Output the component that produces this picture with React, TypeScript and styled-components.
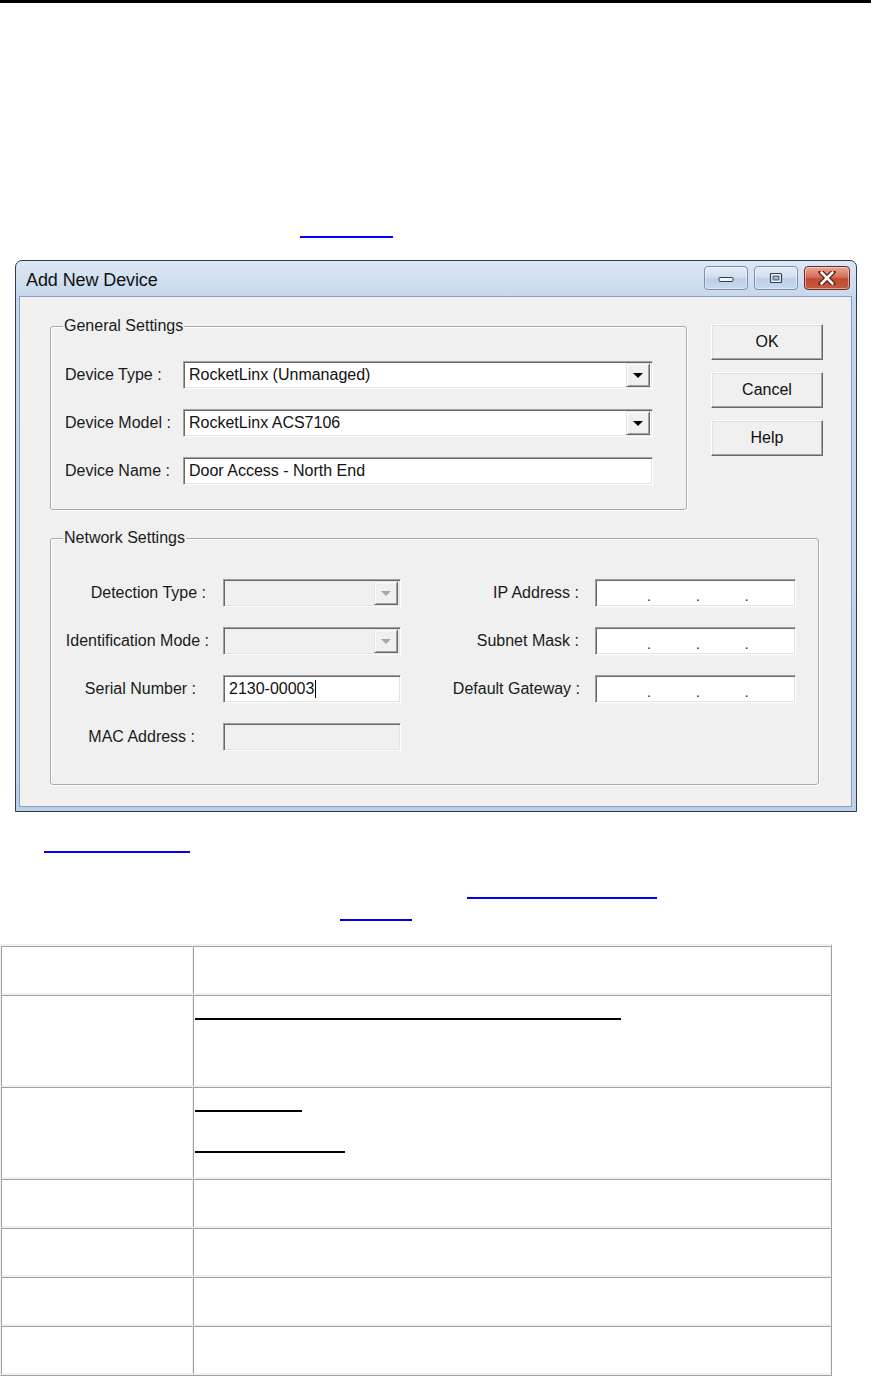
import React from "react";
import styled, { createGlobalStyle } from "styled-components";

const GlobalStyle = createGlobalStyle`
  body {
    margin: 0;
    background: #ffffff;
    font-family: "Liberation Sans", Arial, sans-serif;
  }
`;

const Page = styled.div`
  width: 871px;
  height: 1376px;
  overflow: hidden;
  display: flex;
  flex-direction: column;
`;

const TopRule = styled.div`
  height: 3px;
  background: #000;
`;

const LinkRule = styled.div<{ $top: number; $left: number; $width: number }>`
  margin-top: ${(p) => p.$top}px;
  margin-left: ${(p) => p.$left}px;
  width: ${(p) => p.$width}px;
  height: 2px;
  background: #0000ff;
`;

// ---------- dialog window ----------

const Window = styled.div`
  margin-top: 22px;
  margin-left: 15px;
  width: 842px;
  height: 552px;
  box-sizing: border-box;
  border: 1px solid #2e3b4c;
  border-radius: 7px 7px 0 0;
  background: linear-gradient(#dce7f5, #c4d6ec 40px, #bcd0ea);
  padding: 0 4px 4px 3px;
  display: flex;
  flex-direction: column;
`;

const TitleBar = styled.div`
  height: 35px;
  display: flex;
  align-items: center;
  padding-left: 7px;
  padding-right: 2px;
`;

const Title = styled.div`
  flex: 1;
  font-family: "Liberation Sans", Arial, sans-serif;
  font-size: 18px;
  color: #111;
  letter-spacing: -0.1px;
  margin-top: 3px;
`;

const CaptionButtons = styled.div`
  display: flex;
  gap: 6px;
  margin-top: -2px;
`;

const CaptionButton = styled.div<{ $close?: boolean }>`
  width: ${(p) => (p.$close ? 46 : 44)}px;
  height: 24px;
  box-sizing: border-box;
  border-radius: 4px;
  border: 1px solid ${(p) => (p.$close ? "#6f2a1e" : "#7b8fa8")};
  background: ${(p) =>
    p.$close
      ? "linear-gradient(#e9a898, #d2705c 45%, #c04a31 55%, #c65a42)"
      : "linear-gradient(#e4ecf7, #d2def0 45%, #bccfe8 55%, #c8d8ee)"};
  box-shadow: inset 0 0 0 1px rgba(255, 255, 255, 0.45);
  display: flex;
  align-items: center;
  justify-content: center;
`;

const Client = styled.div`
  flex: 1;
  box-sizing: border-box;
  background: #f0f0f0;
  border: 1px solid #8aa0bd;
  padding: 29px 0 0 30px;
  display: flex;
  flex-direction: column;
  gap: 28px;
`;

const TopSection = styled.div`
  display: flex;
  align-items: flex-start;
  gap: 24px;
`;

const GroupBox = styled.div<{ $width: number; $height: number }>`
  position: relative;
  width: ${(p) => p.$width}px;
  height: ${(p) => p.$height}px;
  box-sizing: border-box;
  border: 1px solid #a9a9a9;
  border-radius: 3px;
  box-shadow: inset 1px 1px 0 #ffffff, 1px 1px 0 #ffffff;
  padding-left: 14px;
`;

const GroupLabel = styled.div`
  position: absolute;
  top: -10px;
  left: 12px;
  padding: 0 1px;
  background: #f0f0f0;
  font-size: 16px;
  line-height: 18px;
  color: #1a1a1a;
`;

const GeneralRows = styled.div`
  padding-top: 34px;
  display: flex;
  flex-direction: column;
  gap: 20px;
`;

const FormRow = styled.div`
  display: flex;
  align-items: center;
`;

const Label = styled.div<{ $width: number }>`
  width: ${(p) => p.$width}px;
  font-size: 16px;
  color: #1a1a1a;
  white-space: nowrap;
`;

const Sunken = styled.div<{ $width: number; $disabled?: boolean }>`
  width: ${(p) => p.$width}px;
  height: 28px;
  box-sizing: border-box;
  border-top: 1px solid #a0a0a0;
  border-left: 1px solid #a0a0a0;
  border-right: 1px solid #ffffff;
  border-bottom: 1px solid #ffffff;
  box-shadow: inset 1px 1px 0 #696969, inset -1px -1px 0 #e3e3e3;
  background: ${(p) => (p.$disabled ? "#f0f0f0" : "#ffffff")};
  display: flex;
  align-items: center;
  padding: 2px 2px 2px 5px;
  font-size: 16px;
  color: #111;
  white-space: nowrap;
`;

const FieldText = styled.span`
  flex: 1;
`;

const DropButton = styled.div<{ $disabled?: boolean }>`
  width: 24px;
  height: 24px;
  box-sizing: border-box;
  background: #f0f0f0;
  border-top: 1px solid #e3e3e3;
  border-left: 1px solid #e3e3e3;
  border-right: 1px solid #696969;
  border-bottom: 1px solid #696969;
  box-shadow: inset 1px 1px 0 #ffffff, inset -1px -1px 0 #a0a0a0;
  display: flex;
  align-items: center;
  justify-content: center;

  &::after {
    content: "";
    border-left: 5px solid transparent;
    border-right: 5px solid transparent;
    border-top: 5px solid ${(p) => (p.$disabled ? "#a6a6a6" : "#000")};
  }
`;

const Caret = styled.span`
  display: inline-block;
  width: 1px;
  height: 18px;
  background: #000;
  vertical-align: middle;
  margin-left: 1px;
`;

const ButtonColumn = styled.div`
  display: flex;
  flex-direction: column;
  gap: 12px;
  margin-top: -2px;
`;

const PushButton = styled.div`
  width: 112px;
  height: 36px;
  box-sizing: border-box;
  background: #f0f0f0;
  border-top: 1px solid #ffffff;
  border-left: 1px solid #ffffff;
  border-right: 1px solid #696969;
  border-bottom: 1px solid #696969;
  box-shadow: inset -1px -1px 0 #a0a0a0, inset 1px 1px 0 #e3e3e3;
  display: flex;
  align-items: center;
  justify-content: center;
  font-size: 16px;
  color: #111;
`;

const NetworkGrid = styled.div`
  padding-top: 40px;
  display: grid;
  grid-template-columns: 158px 178px 194px 201px;
  grid-auto-rows: 28px;
  row-gap: 20px;
  align-items: center;
`;

const GridLabel = styled.div<{ $pad: number }>`
  text-align: right;
  padding-right: ${(p) => p.$pad}px;
  font-size: 16px;
  color: #1a1a1a;
  white-space: nowrap;
`;

const IpDots = styled.div`
  display: flex;
  gap: 45px;
  padding-left: 46px;
  padding-top: 6px;
  font-size: 14px;
  color: #222;
`;

// ---------- table ----------

const Table = styled.table`
  margin-top: 23px;
  width: 832px;
  border-collapse: separate;
  border-spacing: 0;
  border-top: 2px solid #f0f0f0;
  border-left: 1px solid #f0f0f0;
  border-right: 1px solid #a0a0a0;
  border-bottom: 1px solid #a0a0a0;
`;

const Cell = styled.td<{ $width?: number }>`
  width: ${(p) => (p.$width ? `${p.$width}px` : "auto")};
  padding: 0 0 0 1px;
  vertical-align: top;
  border-top: 1px solid #a0a0a0;
  border-left: 1px solid #a0a0a0;
  border-right: 1px solid #f0f0f0;
  border-bottom: 2px solid #f0f0f0;
`;

const CellBody = styled.div<{ $height: number }>`
  height: ${(p) => p.$height}px;
  display: flex;
  flex-direction: column;
`;

const TextRule = styled.div<{ $top: number; $width: number }>`
  margin-top: ${(p) => p.$top}px;
  width: ${(p) => p.$width}px;
  height: 2px;
  background: #000;
`;

const MinGlyph = () => (
  <svg width="16" height="10" viewBox="0 0 16 10">
    <rect x="1" y="4.5" width="14" height="4" rx="1" fill="#f4f7fb" stroke="#2f3e52" strokeWidth="1" />
  </svg>
);

const MaxGlyph = () => (
  <svg width="14" height="12" viewBox="0 0 14 12">
    <rect x="1.5" y="1.5" width="11" height="9" rx="1" fill="#f4f7fb" stroke="#2f3e52" strokeWidth="1.2" />
    <rect x="4" y="4" width="6" height="4" fill="#9fb4cf" stroke="#2f3e52" strokeWidth="0.8" />
  </svg>
);

const CloseGlyph = () => (
  <svg width="18" height="14" viewBox="0 0 18 14">
    <path d="M3 1 L15 13 M15 1 L3 13" stroke="#4a1a10" strokeWidth="5" strokeLinecap="round" />
    <path d="M3.5 1.5 L14.5 12.5 M14.5 1.5 L3.5 12.5" stroke="#ffffff" strokeWidth="2.6" strokeLinecap="round" />
  </svg>
);

const rows: { height: number; rules: { top: number; width: number }[] }[] = [
  { height: 46, rules: [] },
  { height: 89, rules: [{ top: 22, width: 426 }] },
  { height: 89, rules: [{ top: 22, width: 107 }, { top: 39, width: 150 }] },
  { height: 46, rules: [] },
  { height: 46, rules: [] },
  { height: 46, rules: [] },
  { height: 46, rules: [] },
];

export default function App() {
  return (
    <Page>
      <GlobalStyle />
      <TopRule />
      <LinkRule $top={233} $left={300} $width={93} />

      <Window>
        <TitleBar>
          <Title>Add New Device</Title>
          <CaptionButtons>
            <CaptionButton>
              <MinGlyph />
            </CaptionButton>
            <CaptionButton>
              <MaxGlyph />
            </CaptionButton>
            <CaptionButton $close>
              <CloseGlyph />
            </CaptionButton>
          </CaptionButtons>
        </TitleBar>

        <Client>
          <TopSection>
            <GroupBox $width={637} $height={184}>
              <GroupLabel>General Settings</GroupLabel>
              <GeneralRows>
                <FormRow>
                  <Label $width={118}>Device Type :</Label>
                  <Sunken $width={470}>
                    <FieldText>RocketLinx (Unmanaged)</FieldText>
                    <DropButton />
                  </Sunken>
                </FormRow>
                <FormRow>
                  <Label $width={118}>Device Model :</Label>
                  <Sunken $width={470}>
                    <FieldText>RocketLinx ACS7106</FieldText>
                    <DropButton />
                  </Sunken>
                </FormRow>
                <FormRow>
                  <Label $width={118}>Device Name :</Label>
                  <Sunken $width={470}>
                    <FieldText>Door Access - North End</FieldText>
                  </Sunken>
                </FormRow>
              </GeneralRows>
            </GroupBox>

            <ButtonColumn>
              <PushButton>OK</PushButton>
              <PushButton>Cancel</PushButton>
              <PushButton>Help</PushButton>
            </ButtonColumn>
          </TopSection>

          <GroupBox $width={769} $height={247}>
            <GroupLabel>Network Settings</GroupLabel>
            <NetworkGrid>
              <GridLabel $pad={17}>Detection Type :</GridLabel>
              <Sunken $width={178} $disabled>
                <FieldText />
                <DropButton $disabled />
              </Sunken>
              <GridLabel $pad={16}>IP Address :</GridLabel>
              <Sunken $width={201}>
                <IpDots>
                  <span>.</span>
                  <span>.</span>
                  <span>.</span>
                </IpDots>
              </Sunken>

              <GridLabel $pad={14}>Identification Mode :</GridLabel>
              <Sunken $width={178} $disabled>
                <FieldText />
                <DropButton $disabled />
              </Sunken>
              <GridLabel $pad={16}>Subnet Mask :</GridLabel>
              <Sunken $width={201}>
                <IpDots>
                  <span>.</span>
                  <span>.</span>
                  <span>.</span>
                </IpDots>
              </Sunken>

              <GridLabel $pad={27}>Serial Number :</GridLabel>
              <Sunken $width={178}>
                <FieldText>
                  2130-00003
                  <Caret />
                </FieldText>
              </Sunken>
              <GridLabel $pad={15}>Default Gateway :</GridLabel>
              <Sunken $width={201}>
                <IpDots>
                  <span>.</span>
                  <span>.</span>
                  <span>.</span>
                </IpDots>
              </Sunken>

              <GridLabel $pad={28}>MAC Address :</GridLabel>
              <Sunken $width={178} $disabled />
            </NetworkGrid>
          </GroupBox>
        </Client>
      </Window>

      <LinkRule $top={39} $left={44} $width={146} />
      <LinkRule $top={44} $left={467} $width={190} />
      <LinkRule $top={20} $left={340} $width={72} />

      <Table>
        <tbody>
          {rows.map((row, i) => (
            <tr key={i}>
              <Cell $width={189}>
                <CellBody $height={row.height} />
              </Cell>
              <Cell>
                <CellBody $height={row.height}>
                  {row.rules.map((r, j) => (
                    <TextRule key={j} $top={r.top} $width={r.width} />
                  ))}
                </CellBody>
              </Cell>
            </tr>
          ))}
        </tbody>
      </Table>
    </Page>
  );
}
